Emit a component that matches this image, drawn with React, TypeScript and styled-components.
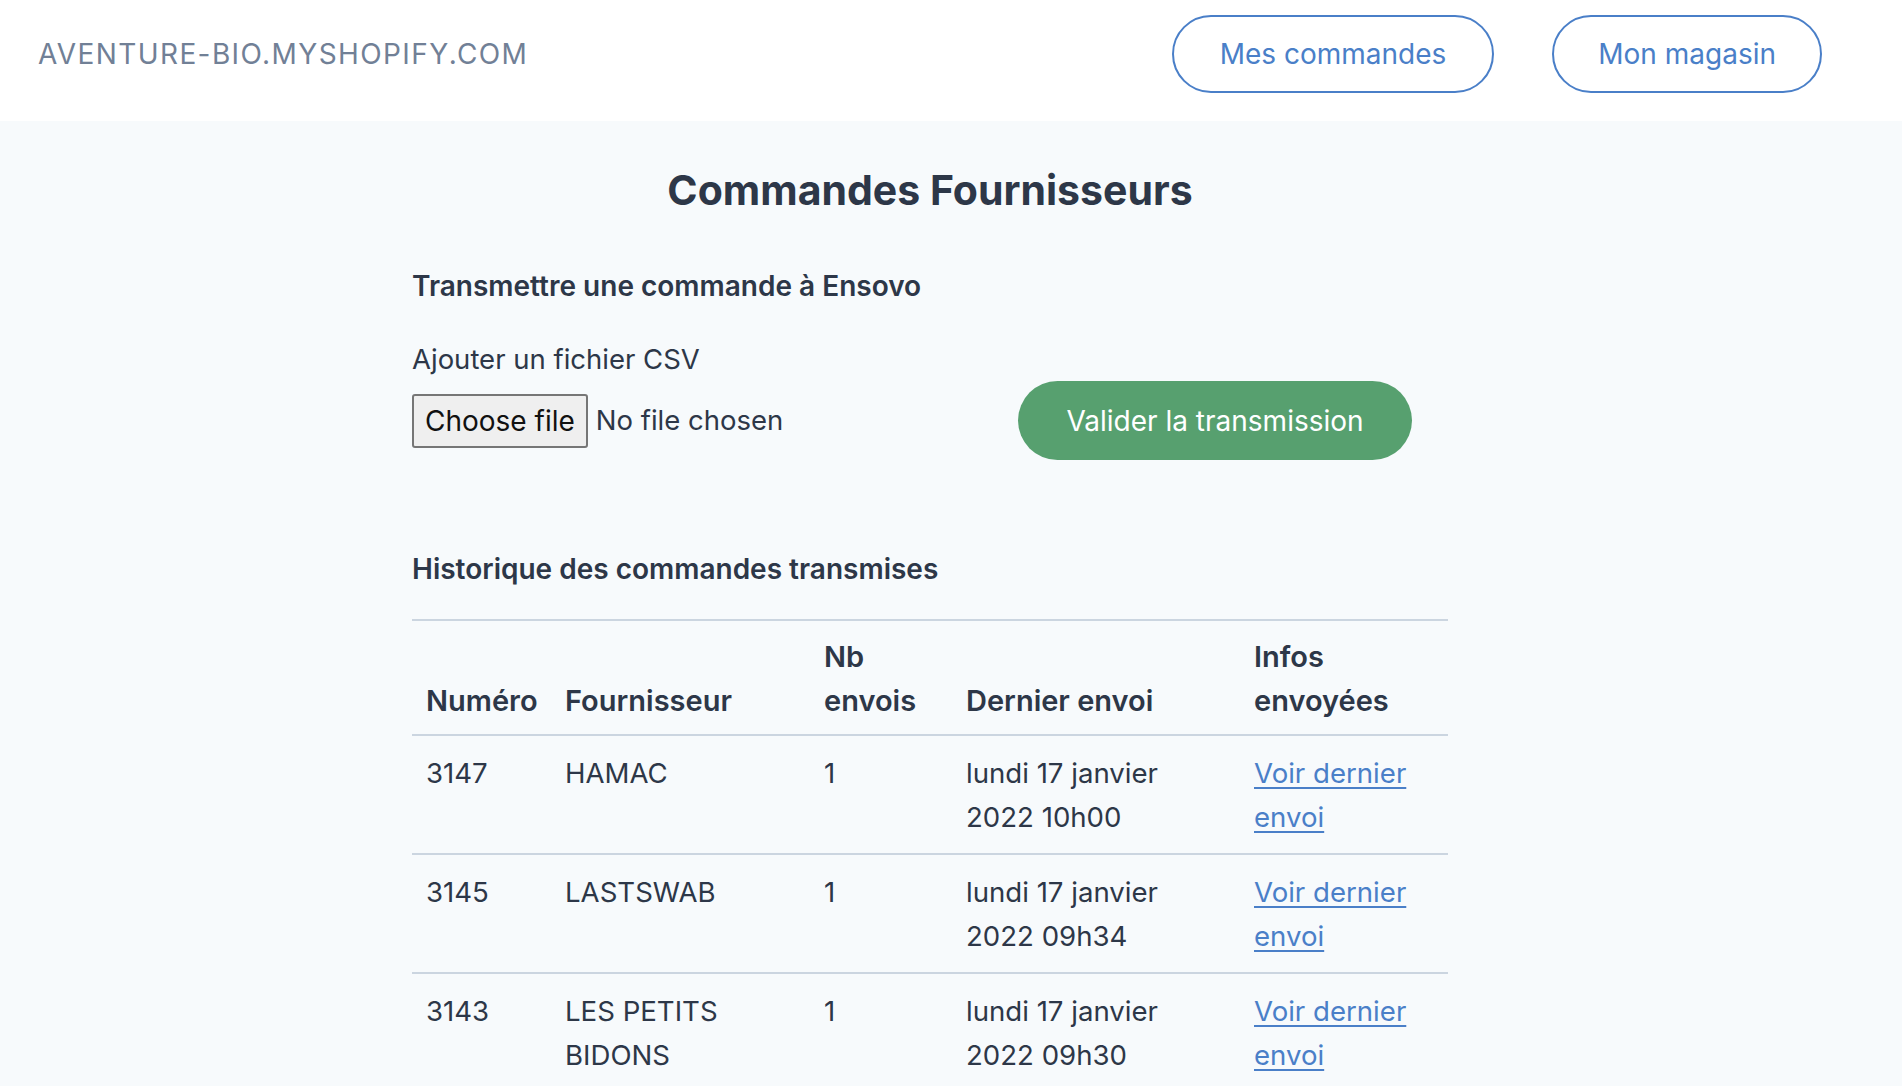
import React from "react";
import styled, { createGlobalStyle } from "styled-components";

const GlobalStyle = createGlobalStyle`
  html, body { margin: 0; padding: 0; }
  body {
    font-family: Inter, "Noto Sans", "Liberation Sans", sans-serif;
    color: #2d3748;
    background: #f7fafc;
  }
`;

const Header = styled.header`
  display: flex;
  align-items: center;
  justify-content: space-between;
  height: 121px;
  box-sizing: border-box;
  padding: 0 80px 14px 38px;
  background: #ffffff;
`;

const Brand = styled.div`
  font-size: 28px;
  letter-spacing: 1.4px;
  text-transform: uppercase;
  color: #718096;
`;

const Nav = styled.nav`
  display: flex;
  gap: 58px;
`;

const NavButton = styled.a<{ $pad: number }>`
  display: inline-flex;
  align-items: center;
  justify-content: center;
  height: 78px;
  box-sizing: border-box;
  padding: 0 ${(p) => p.$pad}px;
  border: 2px solid #4a7fc8;
  border-radius: 40px;
  color: #4a7fc8;
  font-size: 28px;
  text-decoration: none;
  background: #ffffff;
`;

const Main = styled.main`
  display: flex;
  flex-direction: column;
  align-items: center;
  padding: 0 42px 40px 0;
  min-height: calc(100vh - 121px);
  box-sizing: border-box;
`;

const Content = styled.div`
  width: 1036px;
  font-size: 29px;
  line-height: 1.5;
`;

const Title = styled.h1`
  margin: 44px 0 0;
  font-size: 41px;
  line-height: 50px;
  font-weight: 700;
  text-align: center;
  color: #2d3748;
`;

const SectionTitle = styled.h2<{ $top: number }>`
  margin: ${(p) => p.$top}px 0 0;
  font-size: 28px;
  line-height: 1.5;
  font-weight: 600;
  color: #2d3748;
`;

const FieldLabel = styled.label`
  display: block;
  margin-top: 32px;
  font-size: 27.5px;
  color: #2d3748;
`;

const UploadRow = styled.form`
  display: flex;
  align-items: center;
  justify-content: space-between;
  width: 1000px;
  margin-top: 1px;
`;

const FilePicker = styled.label`
  display: inline-flex;
  align-items: center;
  gap: 8px;
  font-size: 27.5px;
  color: #2d3748;
  cursor: pointer;
`;

const HiddenInput = styled.input`
  display: none;
`;

const PickButton = styled.span`
  display: inline-flex;
  align-items: center;
  height: 54px;
  box-sizing: border-box;
  padding: 0 11px;
  border: 2px solid #767676;
  border-radius: 3px;
  background: #efefef;
  color: #111111;
  font-size: 28px;
`;

const FileName = styled.span`
  color: #2d3748;
`;

const SubmitButton = styled.button`
  height: 79px;
  width: 394px;
  border: none;
  border-radius: 40px;
  background: #57a06f;
  color: #ffffff;
  font-family: Inter, "Noto Sans", "Liberation Sans", sans-serif;
  font-size: 28px;
  cursor: pointer;
`;

const Table = styled.table`
  margin-top: 29px;
  width: 100%;
  border-collapse: collapse;
  table-layout: fixed;
  border-top: 2px solid #cbd5e0;
`;

const Th = styled.th`
  text-align: left;
  vertical-align: bottom;
  font-weight: 600;
  padding: 14px 14px 12px;
  border-bottom: 2px solid #cbd5e0;
`;

const Td = styled.td`
  vertical-align: top;
  font-size: 27.6px;
  line-height: 43.5px;
  padding: 16px 14px 14px;
  border-bottom: 2px solid #cbd5e0;
`;

const Link = styled.a`
  color: #4a7fc8;
  text-decoration: underline;
  text-underline-offset: 4px;
`;

const rows = [
  { num: "3147", supplier: "HAMAC", count: 1, date: "lundi 17 janvier 2022 10h00" },
  { num: "3145", supplier: "LASTSWAB", count: 1, date: "lundi 17 janvier 2022 09h34" },
  { num: "3143", supplier: "LES PETITS BIDONS", count: 1, date: "lundi 17 janvier 2022 09h30" },
];

export default function App() {
  return (
    <>
      <GlobalStyle />
      <Header>
        <Brand>aventure-bio.myshopify.com</Brand>
        <Nav>
          <NavButton href="#" $pad={46}>Mes commandes</NavButton>
          <NavButton href="#" $pad={44}>Mon magasin</NavButton>
        </Nav>
      </Header>
      <Main>
        <Content>
          <Title>Commandes Fournisseurs</Title>
          <SectionTitle $top={50}>Transmettre une commande à Ensovo</SectionTitle>
          <FieldLabel htmlFor="csv">Ajouter un fichier CSV</FieldLabel>
          <UploadRow onSubmit={(e) => e.preventDefault()}>
            <FilePicker>
              <HiddenInput id="csv" type="file" accept=".csv" />
              <PickButton>Choose file</PickButton>
              <FileName>No file chosen</FileName>
            </FilePicker>
            <SubmitButton type="submit">Valider la transmission</SubmitButton>
          </UploadRow>
          <SectionTitle $top={88}>Historique des commandes transmises</SectionTitle>
          <Table>
            <colgroup>
              <col style={{ width: 139 }} />
              <col style={{ width: 259 }} />
              <col style={{ width: 142 }} />
              <col style={{ width: 288 }} />
              <col style={{ width: 208 }} />
            </colgroup>
            <thead>
              <tr>
                <Th>Numéro</Th>
                <Th>Fournisseur</Th>
                <Th>Nb envois</Th>
                <Th>Dernier envoi</Th>
                <Th>Infos envoyées</Th>
              </tr>
            </thead>
            <tbody>
              {rows.map((r) => (
                <tr key={r.num}>
                  <Td>{r.num}</Td>
                  <Td>{r.supplier}</Td>
                  <Td>{r.count}</Td>
                  <Td>{r.date}</Td>
                  <Td>
                    <Link href="#">Voir dernier envoi</Link>
                  </Td>
                </tr>
              ))}
            </tbody>
          </Table>
        </Content>
      </Main>
    </>
  );
}
